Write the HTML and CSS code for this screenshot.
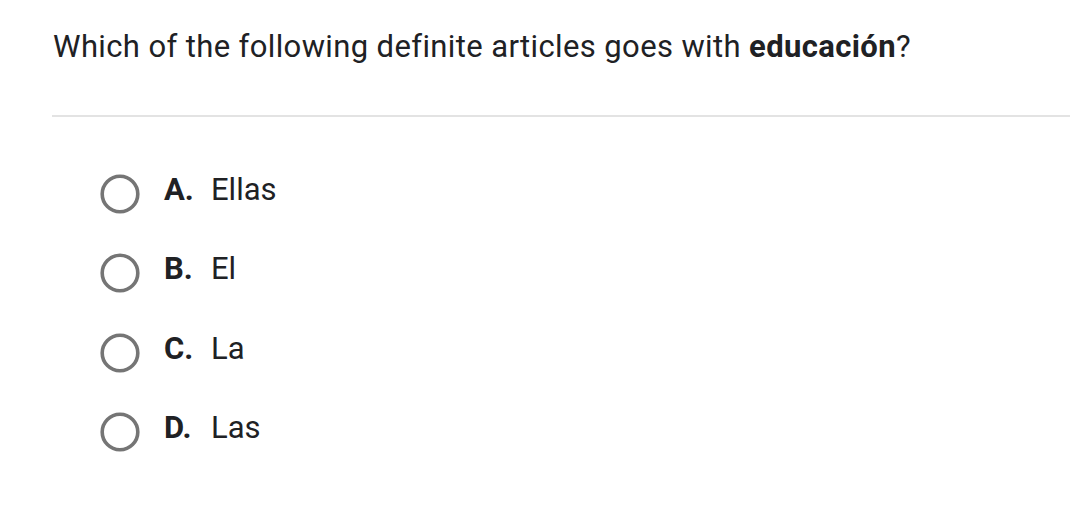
FILE: index.html
```html
<!DOCTYPE html>
<html>
<head>
<meta charset="utf-8">
<link rel="stylesheet" href="styles.css">
</head>
<body>
<div class="question">
  <h1 class="prompt">Which of the following definite articles goes with <b>educación</b>?</h1>
  <hr class="divider">
  <ul class="options">
    <li class="option"><svg class="radio" width="40" height="40" viewBox="0 0 40 40"><circle cx="20" cy="20" r="17.8"/></svg><span class="letter">A.</span><span class="text">Ellas</span></li>
    <li class="option"><svg class="radio" width="40" height="40" viewBox="0 0 40 40"><circle cx="20" cy="20" r="17.8"/></svg><span class="letter">B.</span><span class="text">El</span></li>
    <li class="option"><svg class="radio" width="40" height="40" viewBox="0 0 40 40"><circle cx="20" cy="20" r="17.8"/></svg><span class="letter">C.</span><span class="text">La</span></li>
    <li class="option"><svg class="radio" width="40" height="40" viewBox="0 0 40 40"><circle cx="20" cy="20" r="17.8"/></svg><span class="letter">D.</span><span class="text">Las</span></li>
  </ul>
</div>
</body>
</html>
```
FILE: styles.css
```css
html, body {
  margin: 0;
  padding: 0;
  background: #ffffff;
}
body {
  font-family: Roboto, "Liberation Sans", sans-serif;
  color: #202124;
}
.question {
  padding: 27px 0 0 52px;
}
.prompt {
  margin: 0;
  font-size: 31px;
  letter-spacing: 0.38px;
  font-weight: 400;
  line-height: 40px;
  padding-left: 1px;
  white-space: nowrap;
}
.prompt b {
  font-weight: 700;
}
.divider {
  border: none;
  border-top: 2px solid #e3e3e3;
  margin: 48px 0 0 0;
  height: 0;
}
.options {
  list-style: none;
  margin: 0;
  padding: 53px 0 0 48px;
  display: flex;
  flex-direction: column;
  gap: 31.33px;
}
.option {
  display: flex;
  align-items: center;
  height: 48px;
  font-size: 31px;
}
.radio {
  flex: none;
  display: block;
}
.radio circle {
  fill: none;
  stroke: #757575;
  stroke-width: 3.6;
}
.letter,
.text {
  line-height: 40px;
  padding-bottom: 8px;
}
.letter {
  font-weight: 700;
  margin-left: 24px;
  width: 47px;
}
.text {
  font-weight: 400;
}
```
